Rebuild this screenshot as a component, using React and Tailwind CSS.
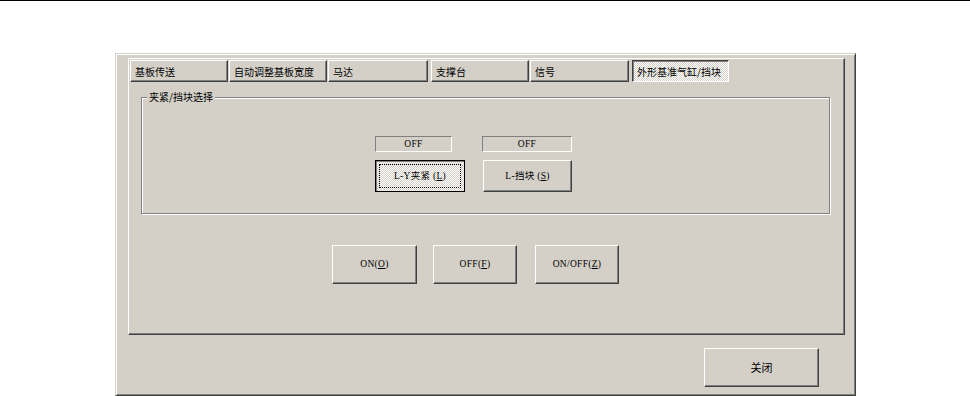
import React from 'react';

const raised =
  'border border-t-white border-l-white border-r-[#404040] border-b-[#404040] shadow-[inset_-1px_-1px_0_#808080]';
const sunkenThin = 'border border-t-[#808080] border-l-[#808080] border-r-white border-b-white';
const dither =
  'bg-[image:repeating-conic-gradient(#ffffff_0%_25%,#d4d0c8_0%_50%)] bg-[length:2px_2px]';
const cjk = 'font-["Noto_Sans_CJK_SC",sans-serif] text-[10px] text-black';
const mixed = 'font-["Liberation_Serif","Noto_Sans_CJK_SC",serif] text-[9.5px] text-black tracking-[0.3px]';

const tabs = [
  { label: '基板传送', cls: 'w-[98px]' },
  { label: '自动调整基板宽度', cls: 'ml-px w-[98px]' },
  { label: '马达', cls: 'ml-px w-[100px]' },
  { label: '支撑台', cls: 'ml-[3px] w-[98px]' },
  { label: '信号', cls: 'ml-px w-[99px]' },
  { label: '外形基准气缸/挡块', cls: 'ml-[3px] w-[97px]', active: true },
];

const U = ({ children }) => <span className="underline underline-offset-1">{children}</span>;

const Tab = ({ label, cls, active }) => (
  <div
    className={
      active
        ? `${cls} h-[22px] flex items-center pl-[4px] border border-t-[#404040] border-l-[#404040] border-r-white border-b-white shadow-[inset_1px_1px_0_#808080] ${dither}`
        : `${cls} h-[22px] flex items-center pl-[4px] bg-[#d4d0c8] ${raised}`
    }
  >
    <span className={`${cjk} whitespace-nowrap`}>{label}</span>
  </div>
);

const Button = ({ cls, children }) => (
  <div className={`${cls} h-[39px] flex items-center justify-center bg-[#d4d0c8] ${raised} ${mixed}`}>
    {children}
  </div>
);

export default function App() {
  return (
    <div className="w-[970px] h-[396px] bg-white border-t border-black overflow-hidden pt-[52px] pl-[115px]">
      {/* dialog */}
      <div className="w-[741px] h-[343px] bg-[#d4d0c8] border border-t-[#d4d0c8] border-l-[#d4d0c8] border-r-[#404040] border-b-[#404040] shadow-[inset_1px_1px_0_#ffffff,inset_-1px_-1px_0_#808080] pl-[12px] pt-[4px]">
        {/* tab control frame */}
        <div className={`w-[717px] h-[277px] pt-px pl-px ${raised}`}>
          <div className="flex">
            {tabs.map((t) => (
              <Tab key={t.label} {...t} />
            ))}
          </div>

          {/* group box */}
          <div className="relative ml-[11px] mt-[15px] w-[689px] h-[117px] border border-[#808080] shadow-[inset_1px_1px_0_#ffffff,1px_1px_0_#ffffff] pt-[38px] pl-[233px]">
            <span className={`absolute left-[5px] top-[-8px] px-[2px] bg-[#d4d0c8] leading-[14px] ${cjk}`}>
              夹紧/挡块选择
            </span>
            <div className="flex gap-[17px]">
              <div className="flex flex-col w-[90px]">
                <div className={`w-[77px] h-[16px] flex items-center justify-center ${sunkenThin} ${mixed}`}>OFF</div>
                <div className={`mt-[8px] w-[90px] h-[32px] p-[3px] border border-black shadow-[inset_1px_1px_0_#808080] ${dither}`}>
                  <div className={`h-full flex items-center justify-center border border-dotted border-black ${mixed}`}>
                    L-Y夹紧 (<U>L</U>)
                  </div>
                </div>
              </div>
              <div className="flex flex-col w-[90px]">
                <div className={`w-[90px] h-[16px] flex items-center justify-center ${sunkenThin} ${mixed}`}>OFF</div>
                <div className={`mt-[8px] ml-px w-[89px] h-[32px] flex items-center justify-center bg-[#d4d0c8] ${raised} ${mixed}`}>
                  L-挡块 (<U>S</U>)
                </div>
              </div>
            </div>
          </div>

          {/* switch buttons */}
          <div className="flex mt-[31px] ml-[202px]">
            <Button cls="w-[85px]">
              ON(<U>O</U>)
            </Button>
            <Button cls="ml-[16px] w-[84px]">
              OFF(<U>F</U>)
            </Button>
            <Button cls="ml-[18px] w-[84px]">
              ON/OFF(<U>Z</U>)
            </Button>
          </div>
        </div>

        {/* close */}
        <div className={`mt-[13px] ml-[576px] w-[115px] h-[39px] flex items-center justify-center bg-[#d4d0c8] ${raised} ${cjk} text-[11px]`}>
          关闭
        </div>
      </div>
    </div>
  );
}
